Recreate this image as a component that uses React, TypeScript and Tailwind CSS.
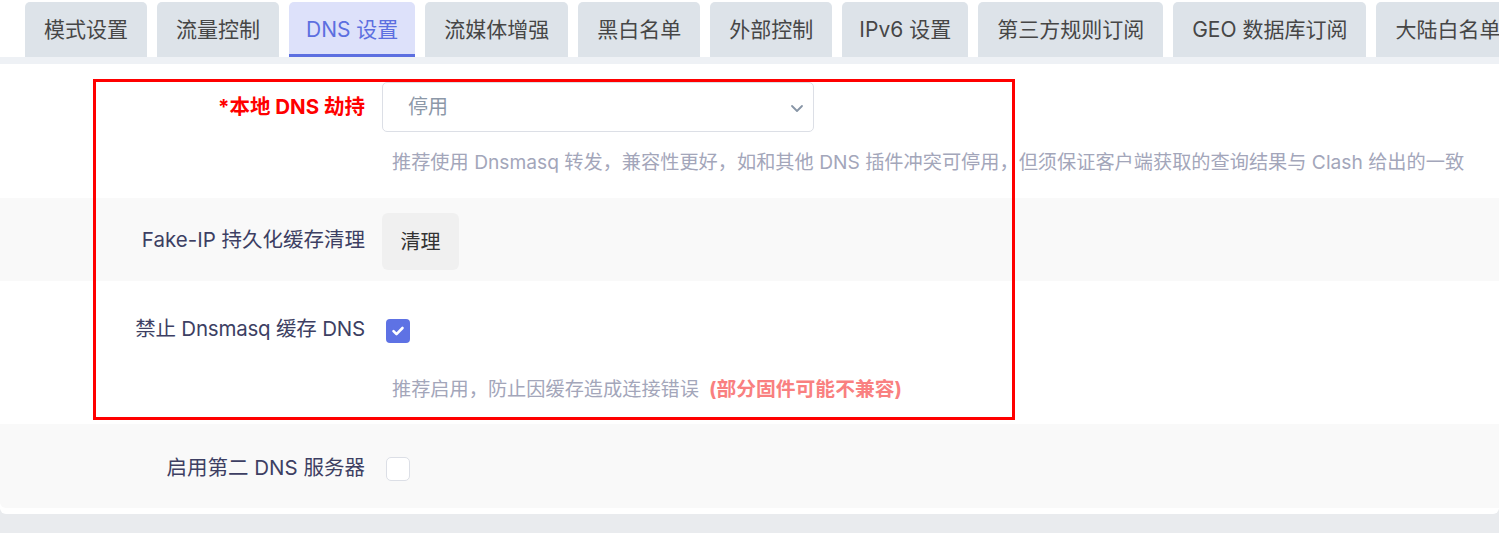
import React from "react";

const tabs = [
  { t: "模式设置", px: "px-[19px]" },
  { t: "流量控制", px: "px-[19px]" },
  { t: "DNS 设置", px: "px-[17px]" },
  { t: "流媒体增强", px: "px-[19px]" },
  { t: "黑白名单", px: "px-[19px]" },
  { t: "外部控制", px: "px-[19px]" },
  { t: "IPv6 设置", px: "px-[17px]" },
  { t: "第三方规则订阅", px: "px-[19px]" },
  { t: "GEO 数据库订阅", px: "px-[19px]" },
  { t: "大陆白名单订阅", px: "px-[19px]" },
];

const font = {
  fontFamily: '"Inter", "Noto Sans CJK SC", sans-serif',
};

const Label = ({ children, className = "" }: { children: React.ReactNode; className?: string }) => (
  <div className={`w-[382px] shrink-0 pr-[17px] text-right text-[20.5px] text-[#3d3f63] ${className}`}>{children}</div>
);

const Help = ({ children }: { children: React.ReactNode }) => (
  <p className="pl-[10px] text-[19.2px] leading-[24px] text-[#a3a6ba] whitespace-nowrap">{children}</p>
);

const App = () => {
  return (
    <div className="relative w-[1499px] h-[533px] overflow-hidden bg-[#e9ebee]" style={font}>
      {/* tab bar */}
      <div className="flex gap-[10px] pl-[25px] pt-[2px] bg-white overflow-hidden whitespace-nowrap">
        {tabs.map(({ t, px }) => {
          const active = t === "DNS 设置";
          return (
            <div
              key={t}
              className={`shrink-0 h-[55px] ${px} flex items-center rounded-t-[5px] text-[21px] ${
                active
                  ? "bg-[#dde1fa] text-[#5c6fe0] border-b-[3px] border-[#5c6fe0] pt-[3px]"
                  : "bg-[#dde3e9] text-[#464646]"
              }`}
            >
              {t}
            </div>
          );
        })}
      </div>
      <div className="h-[7px] bg-[#eef1f5]" />

      {/* settings card */}
      <div className="bg-white rounded-b-[6px] pb-[6px]">
        {/* local dns hijack */}
        <div className="h-[134px] pt-[18px] flex">
          <Label className="leading-[50px] font-bold text-[#ff0000]">*本地 DNS 劫持</Label>
          <div className="flex flex-col">
            <div className="relative w-[432px] h-[50px] rounded-[5px] border border-[#dcdfe6] flex items-center pl-[25px] text-[20px] text-[#8c98a8]">
              停用
              <svg className="absolute right-[8px] top-[17px]" width="16" height="16" viewBox="0 0 16 16" fill="none">
                <path d="M3 6l5 5 5-5" stroke="#8795a6" strokeWidth="1.8" strokeLinecap="round" strokeLinejoin="round" />
              </svg>
            </div>
            <div className="mt-[18px]">
              <Help>推荐使用 Dnsmasq 转发，兼容性更好，如和其他 DNS 插件冲突可停用，但须保证客户端获取的查询结果与 Clash 给出的一致</Help>
            </div>
          </div>
        </div>

        {/* fake-ip cache */}
        <div className="h-[83px] pt-[15px] flex bg-[#f9f9f9]">
          <Label className="leading-[54px]">Fake-IP 持久化缓存清理</Label>
          <button className="w-[77px] h-[57px] rounded-[6px] bg-[#f0f0f0] text-[20px] text-[#333]">清理</button>
        </div>

        {/* dnsmasq cache */}
        <div className="h-[143px] pt-[23px] flex">
          <Label className="leading-[50px] tracking-[-0.2px]">禁止 Dnsmasq 缓存 DNS</Label>
          <div className="flex flex-col">
            <div className="h-[50px] flex items-center pl-[4px] pt-[4px]">
              <span className="w-[24px] h-[24px] rounded-[4px] bg-[#5e72e4] flex items-center justify-center">
                <svg width="14" height="14" viewBox="0 0 14 14" fill="none">
                  <path d="M2.5 7.2l3 3 6-6.2" stroke="white" strokeWidth="2.6" strokeLinecap="round" strokeLinejoin="round" />
                </svg>
              </span>
            </div>
            <div className="mt-[23px]">
              <Help>
                推荐启用，防止因缓存造成连接错误
                <span className="ml-[10px] text-[19.8px] font-bold text-[#f98080]">(部分固件可能不兼容)</span>
              </Help>
            </div>
          </div>
        </div>

        {/* second dns */}
        <div className="h-[84px] flex items-center bg-[#f9f9f9] rounded-bl-[6px]">
          <Label className="pt-[4px]">启用第二 DNS 服务器</Label>
          <span className="ml-[4px] mt-[6px] w-[24px] h-[24px] rounded-[5px] border border-[#dcdfe6] bg-white" />
        </div>
      </div>

      {/* red highlight overlay */}
      <div className="absolute left-[93px] top-[79px] w-[922px] h-[341px] border-[3px] border-[#ff0000] pointer-events-none" />
    </div>
  );
};

export default App;
